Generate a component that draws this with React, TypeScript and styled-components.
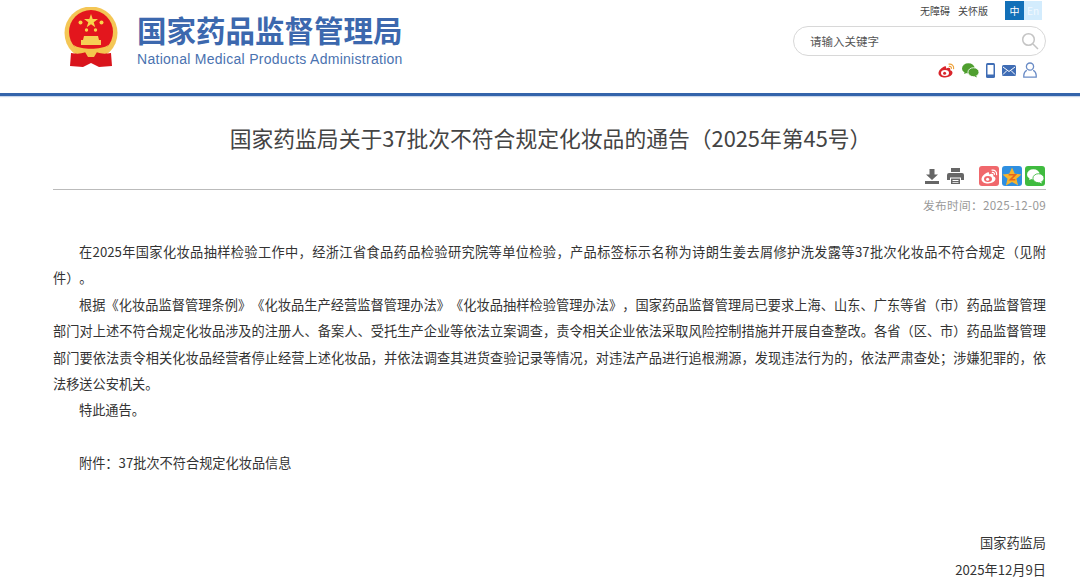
import styled, { createGlobalStyle } from "styled-components";

const GlobalStyle = createGlobalStyle`
  html, body {
    margin: 0;
    padding: 0;
    background: #fff;
    overflow: hidden;
    font-family: "Noto Sans CJK SC", "Liberation Sans", sans-serif;
  }
`;

const Page = styled.div`
  width: 1080px;
  height: 583px;
  overflow: hidden;
  background: #fff;
`;

const Header = styled.header`
  height: 93px;
  border-bottom: 3px solid #3464ab;
  box-shadow: 0 1px 1px #c9d6ea;
  display: flex;
  justify-content: space-between;
  padding: 0 34px 0 63px;
`;

const Brand = styled.div`
  display: flex;
  gap: 18px;
  padding-top: 7px;
  height: 60px;
`;

const BrandText = styled.div`
  display: flex;
  flex-direction: column;
  padding-top: 5px;
`;

const BrandName = styled.div`
  font-size: 29.5px;
  line-height: 34px;
  font-weight: 700;
  color: #3c68ae;
  white-space: nowrap;
`;

const BrandEnglish = styled.div`
  font-family: "Liberation Sans", sans-serif;
  font-size: 14px;
  letter-spacing: 0.28px;
  line-height: 18px;
  margin-top: 4px;
  color: #4a72b0;
  white-space: nowrap;
`;

const Tools = styled.div`
  width: 253px;
  display: flex;
  flex-direction: column;
  align-items: flex-end;
`;

const TopLinks = styled.div`
  display: flex;
  align-items: center;
  height: 20px;
  font-size: 10px;
  color: #444;
`;

const TopLink = styled.span`
  margin-right: 8px;
`;

const Lang = styled.span<{ $active?: boolean }>`
  width: ${(p) => (p.$active ? "19px" : "18px")};
  height: 19px;
  display: flex;
  align-items: center;
  justify-content: center;
  font-size: 10px;
  background: ${(p) => (p.$active ? "#1270b8" : "#d3ecfd")};
  color: ${(p) => (p.$active ? "#fff" : "#f2f9ff")};
`;

const LangGroup = styled.div`
  display: flex;
  margin-top: 1px;
  margin-left: 17px;
  margin-right: 4px;
`;

const Search = styled.div`
  width: 253px;
  height: 30px;
  box-sizing: border-box;
  margin-top: 6px;
  border: 1.5px solid #d8d8d8;
  border-radius: 15px;
  display: flex;
  align-items: center;
  justify-content: space-between;
  padding: 0 6px 0 16px;
  font-size: 11.5px;
  color: #555;
`;

const Social = styled.div`
  display: flex;
  align-items: center;
  gap: 7px;
  margin-top: 4px;
  margin-right: 9px;
  height: 20px;
`;

const Article = styled.main`
  padding: 0 34px 0 53px;
`;

const Title = styled.h1`
  margin: 27px 0 0;
  padding-left: 2px;
  font-size: 21.8px;
  line-height: 30px;
  font-weight: 400;
  color: #444;
  text-align: center;
`;

const ActionBar = styled.div`
  margin-top: 13px;
  height: 23px;
  border-bottom: 1px solid #bbb;
  display: flex;
  align-items: flex-start;
  justify-content: flex-end;
`;

const PrintGroup = styled.div`
  display: flex;
  gap: 7px;
  margin-right: 15px;
  padding-top: 2px;
`;

const ShareGroup = styled.div`
  display: flex;
  gap: 3px;
  margin-right: 1px;
`;

const ShareBtn = styled.span<{ $bg: string }>`
  width: 20px;
  height: 20px;
  border-radius: 3px;
  background: ${(p) => p.$bg};
  display: flex;
  align-items: center;
  justify-content: center;
`;

const PubDate = styled.div`
  margin-top: 7px;
  font-size: 11.7px;
  line-height: 16px;
  color: #999;
  text-align: right;
  letter-spacing: 0.3px;
`;

const Body = styled.div`
  margin-top: 26px;
  font-size: 13.2px;
  line-height: 26.4px;
  color: #333;
  text-spacing-trim: space-all;
`;

const Para = styled.p`
  margin: 0;
  text-indent: 26px;
  text-align: justify;
`;

const Attachment = styled(Para)`
  margin-top: 26.4px;
`;

const Signature = styled.div`
  margin-top: 52px;
  text-align: right;
  font-size: 13.2px;
  line-height: 27px;
  color: #333;
`;

const Emblem = () => (
  <svg width="56" height="60" viewBox="0 0 56 60">
    <circle cx="28" cy="26" r="26.500" fill="#f4c655" />
    <circle cx="28" cy="25" r="22" fill="#e3161d" />
    <polygon
      points="28,7 29.700,12 35,12 30.700,15.200 32.300,20.200 28,17.200 23.700,20.200 25.300,15.200 21,12 26.300,12"
      fill="#f8d44c"
    />
    <circle cx="17.500" cy="15.500" r="2" fill="#f8d44c" />
    <circle cx="38.500" cy="15.500" r="2" fill="#f8d44c" />
    <circle cx="23.500" cy="23" r="1.700" fill="#f8d44c" />
    <circle cx="32.500" cy="23" r="1.700" fill="#f8d44c" />
    <path d="M21 29h14l1 4h2v5H18v-5h2z" fill="#f6cf55" />
    <path d="M11 38c6 5 28 5 34 0l-2 7c-6 3-24 3-30 0z" fill="#f3c64e" />
    <path
      d="M8 46c6 1 9 1 15-1l5 3 5-3c6 2 9 2 15 1l1 13-13 1-8-4-8 4-13-1z"
      fill="#d9141c"
    />
    <path d="M22 45h12l-3 5h-6z" fill="#f3c64e" />
  </svg>
);

const SearchIcon = () => (
  <svg width="18" height="18" viewBox="0 0 18 18" fill="none" stroke="#c4c4c4" strokeWidth="1.5">
    <circle cx="7.5" cy="7.5" r="5.8" />
    <path d="M12 12l5 5" />
  </svg>
);

const WeiboGlyph = ({ body, eye, wave }: { body: string; eye: string; wave: string }) => (
  <svg width="17" height="15" viewBox="0 0 17 15">
    <path d="M7 3.2C3.6 4.4.5 7.4.5 10.2c0 2.7 3.3 4.3 6.6 4.3 4.3 0 7.4-2.5 7.4-4.7 0-1.5-1.3-2.2-2.3-2.5.4-1.3 0-2.4-1.5-2.5-.9 0-1.9.3-2.6.7.2-1-.1-2.6-.6-2.3z" fill={body} />
    <ellipse cx="7" cy="10" rx="4" ry="3" fill={eye} />
    <circle cx="6.6" cy="10.2" r="1.5" fill={body} />
    <path d="M11 1.2c2.7-.6 5 1.6 4.6 4.4M11.3 3.4c1.3-.3 2.4.8 2.1 2" fill="none" stroke={wave} strokeWidth="1.2" strokeLinecap="round" />
  </svg>
);

const WechatGlyph = ({ color, gap }: { color: string; gap: string }) => (
  <svg width="17" height="15" viewBox="0 0 16 14">
    <ellipse cx="6" cy="5" rx="6" ry="4.8" fill={color} />
    <path d="M2.6 8l-.6 2.4L5 9z" fill={color} />
    <ellipse cx="10.8" cy="8.6" rx="5.2" ry="4.2" fill={color} stroke={gap} strokeWidth="0.8" />
    <path d="M13.4 11.600l.6 2-2.500-1.200z" fill={color} />
  </svg>
);

const PhoneIcon = () => (
  <svg width="9" height="15" viewBox="0 0 9 15">
    <rect x="0" y="0" width="9" height="15" rx="1.5" fill="#3f6db5" />
    <rect x="1.5" y="2" width="6" height="9.5" fill="#fff" />
  </svg>
);

const MailIcon = () => (
  <svg width="14" height="11" viewBox="0 0 14 11">
    <rect width="14" height="11" rx="1.5" fill="#3f6db5" />
    <path d="M1 2l6 4.5L13 2M1 9.5l4-4M13 9.5l-4-4" fill="none" stroke="#fff" strokeWidth="1" />
  </svg>
);

const UserIcon = () => (
  <svg width="14" height="16" viewBox="0 0 14 16" fill="none" stroke="#6a8cc6" strokeWidth="1.3">
    <circle cx="7" cy="4.6" r="3.6" />
    <path d="M3.8 8.2C2 9.3.8 11 .8 13.2v2h12.4v-2c0-2.2-1.2-3.9-3-5" />
  </svg>
);

const DownloadIcon = () => (
  <svg width="16" height="16" viewBox="0 0 16 16" fill="#666">
    <path d="M5.500 1h5v5.500H14L8 12 2 6.500h3.500z" />
    <path d="M1 13h14v3H1z" />
  </svg>
);

const PrintIcon = () => (
  <svg width="17" height="16" viewBox="0 0 17 16" fill="#666">
    <path d="M4 0h9v4H4z" />
    <path d="M2 5h13a2 2 0 0 1 2 2v5h-3V9.500H3V12H0V7a2 2 0 0 1 2-2z" />
    <path d="M4 10.500h9V16H4z" />
    <path d="M5.500 12h6v1h-6zM5.500 14h6v.8h-6z" fill="#fff" />
  </svg>
);

const QzoneGlyph = () => (
  <svg width="20" height="19" viewBox="0 0 18 17">
    <polygon points="9,0.500 11.500,6 17.500,6.600 13,10.500 14.500,16.500 9,13.400 3.500,16.500 5,10.500 0.500,6.600 6.500,6" fill="#f7b52c" />
    <path d="M6 7h6l-4.500 4.500H12" fill="none" stroke="#e8641b" strokeWidth="1.4" />
  </svg>
);

export default function App() {
  return (
    <Page>
      <GlobalStyle />
      <Header>
        <Brand>
          <Emblem />
          <BrandText>
            <BrandName>国家药品监督管理局</BrandName>
            <BrandEnglish>National Medical Products Administration</BrandEnglish>
          </BrandText>
        </Brand>
        <Tools>
          <TopLinks>
            <TopLink>无障碍</TopLink>
            <span>关怀版</span>
            <LangGroup>
              <Lang $active>中</Lang>
              <Lang>En</Lang>
            </LangGroup>
          </TopLinks>
          <Search>
            <span>请输入关键字</span>
            <SearchIcon />
          </Search>
          <Social>
            <WeiboGlyph body="#d9252b" eye="#fff" wave="#eda13a" />
            <WechatGlyph color="#4f9f2f" gap="#fff" />
            <PhoneIcon />
            <MailIcon />
            <UserIcon />
          </Social>
        </Tools>
      </Header>
      <Article>
        <Title>国家药监局关于37批次不符合规定化妆品的通告（2025年第45号）</Title>
        <ActionBar>
          <PrintGroup>
            <DownloadIcon />
            <PrintIcon />
          </PrintGroup>
          <ShareGroup>
            <ShareBtn $bg="#f0686c">
              <WeiboGlyph body="#fff" eye="#f0686c" wave="#fff" />
            </ShareBtn>
            <ShareBtn $bg="#2f8fe0">
              <QzoneGlyph />
            </ShareBtn>
            <ShareBtn $bg="#3fbb3f">
              <WechatGlyph color="#fff" gap="#3fbb3f" />
            </ShareBtn>
          </ShareGroup>
        </ActionBar>
        <PubDate>发布时间：2025-12-09</PubDate>
        <Body>
          <Para>
            在2025年国家化妆品抽样检验工作中，经浙江省食品药品检验研究院等单位检验，产品标签标示名称为诗朗生姜去屑修护洗发露等37批次化妆品不符合规定（见附件）。
          </Para>
          <Para>
            根据《化妆品监督管理条例》《化妆品生产经营监督管理办法》《化妆品抽样检验管理办法》，国家药品监督管理局已要求上海、山东、广东等省（市）药品监督管理部门对上述不符合规定化妆品涉及的注册人、备案人、受托生产企业等依法立案调查，责令相关企业依法采取风险控制措施并开展自查整改。各省（区、市）药品监督管理部门要依法责令相关化妆品经营者停止经营上述化妆品，并依法调查其进货查验记录等情况，对违法产品进行追根溯源，发现违法行为的，依法严肃查处；涉嫌犯罪的，依法移送公安机关。
          </Para>
          <Para>特此通告。</Para>
          <Attachment>附件：37批次不符合规定化妆品信息</Attachment>
        </Body>
        <Signature>
          <div>国家药监局</div>
          <div>2025年12月9日</div>
        </Signature>
      </Article>
    </Page>
  );
}
